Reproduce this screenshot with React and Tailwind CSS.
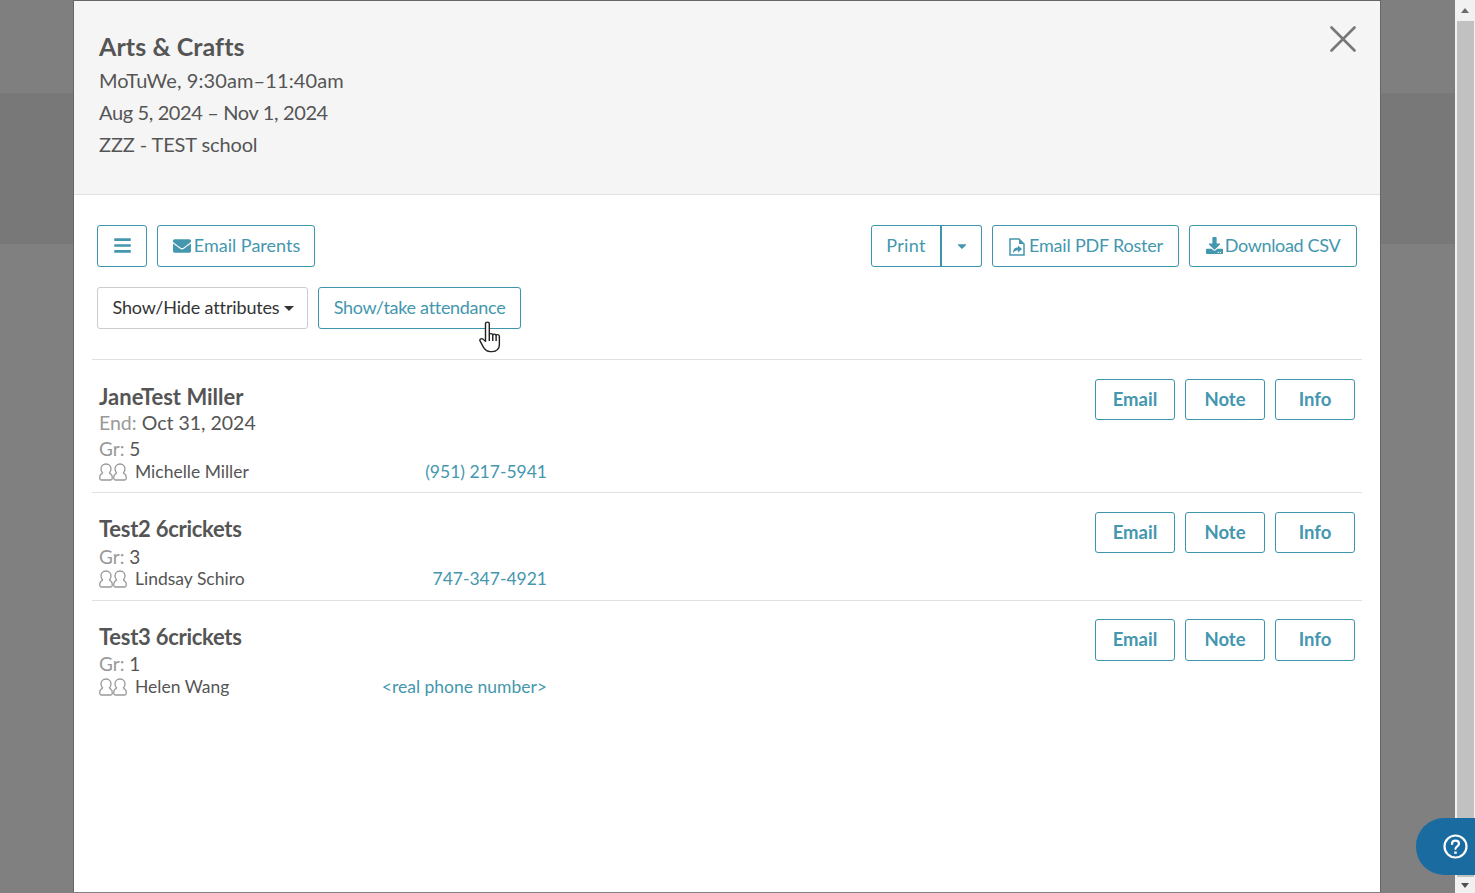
import React from "react";
import { FaBars, FaEnvelope, FaDownload, FaCaretDown } from "react-icons/fa";

const base = "inline-flex items-center justify-center border border-[#3d95ad] rounded-[3px] bg-white text-[#4497ae] leading-none";
const outline = `${base} pb-[3px] text-[18px]`;

function FileShare() {
  return (
    <svg width="16" height="18" viewBox="0 0 16 18" className="mr-[4px] mt-[4px] shrink-0" fill="none">
      <path d="M1 1h9L15 6v11H1z" stroke="#4497ae" strokeWidth="1.500" />
      <path d="M10 1v5h5" fill="#4497ae" />
      <path d="M4 15c0-3.500 1.500-5.500 5-5.500V7.500l4 3.500-4 3.500v-2.200c-2 0-3.500.9-5 2.700z" fill="#4497ae" />
    </svg>
  );
}

function Parents() {
  const one = "M7 1C4 1 2 3 2 6c0 1.600.6 2.800 1.500 3.700-.2.700-.8 1.100-1.400 1.500C1.200 11.800.8 12.500.8 14v1.500C.8 16.400 1.400 17 2.300 17h9.400c.9 0 1.500-.6 1.500-1.500V14c0-1.500-.4-2.200-1.300-2.800-.6-.4-1.200-.8-1.400-1.500.9-.9 1.500-2.100 1.500-3.700C12 3 10 1 7 1z";
  return (
    <svg width="28" height="18" viewBox="0 0 28 18" fill="none" stroke="#999" strokeWidth="1.300" className="shrink-0">
      <path d={one} />
      <path d={one} transform="translate(14 0)" />
    </svg>
  );
}

function Student({ name, end, grade, parent, phone, h, btnCls, btnH, pad, nameTrack, grMt, parentMt }) {
  return (
    <div className={`flex justify-between border-b border-[#e0e0e0] pl-[7px] pr-[7px] ${h}`}>
      <div className={`w-[448px] ${pad}`}>
        <div className={`text-[22px] leading-[30px] font-bold text-[#555] ${nameTrack}`}>{name}</div>
        {end && (
          <div className="text-[19.500px] leading-[24px] text-[#555] mt-[-1px]">
            <span className="text-[#999]">End:</span> {end}
          </div>
        )}
        <div className={`text-[19px] leading-[24px] text-[#555] ${grMt}`}>
          <span className="text-[#999]">Gr:</span> {grade}
        </div>
        <div className={`flex items-center justify-between text-[17.500px] leading-[22px] ${parentMt}`}>
          <span className="flex items-center gap-[8px] text-[#555]">
            <Parents />
            {parent}
          </span>
          <span className="text-[#4497ae]">{phone}</span>
        </div>
      </div>
      <div className={`flex gap-[10px] items-start ${btnCls}`}>
        {["Email", "Note", "Info"].map((t) => (
          <button key={t} className={`${base} w-[80px] ${btnH} pb-[1px] font-bold text-[18.500px]`}>{t}</button>
        ))}
      </div>
    </div>
  );
}

export default function App() {
  return (
    <div className="relative flex w-[1475px] h-[893px] overflow-hidden font-['Lato','Open_Sans',sans-serif] bg-[#7f7f7f]">
      <div className="flex-1 flex flex-col">
        <div className="h-[94px] bg-[#7f7f7f] border-b border-[#797979]"></div>
        <div className="h-[150px] bg-[#787878]"></div>
        <div className="flex-1 bg-[#808080]"></div>
      </div>

      <div className="w-[20px] flex flex-col items-center bg-[#f1f1f1]">
        <div className="h-[21px] flex items-center justify-center">
          <div className="w-0 h-0 border-x-[4px] border-x-transparent border-b-[5px] border-b-[#6b6b6b]"></div>
        </div>
        <div className="w-[17px] h-[856px] bg-[#c1c1c1]"></div>
        <div className="flex-1 flex items-center justify-center">
          <div className="w-0 h-0 border-x-[4px] border-x-transparent border-t-[5px] border-t-[#505050]"></div>
        </div>
      </div>

      {/* Modal */}
      <div className="absolute left-[73px] top-0 w-[1308px] h-[892px] bg-white border border-[#666] border-b-0 flex flex-col">
        <div className="relative h-[194px] shrink-0 bg-[#f5f5f5] border-b border-[#e2e2e2] pl-[25px] pt-[28px] text-[20px] leading-[32px] text-[#555]">
          <div className="text-[25px] leading-[34px] font-bold text-[#555] tracking-[0.08px]">Arts &amp; Crafts</div>
          <div className="mt-[1px] tracking-[0.1px]">MoTuWe, 9:30am–11:40am</div>
          <div className="tracking-[-0.37px]">Aug 5, 2024 – Nov 1, 2024</div>
          <div className="tracking-[-0.12px]">ZZZ - TEST school</div>
          <svg className="absolute right-[24px] top-[25px]" width="26" height="26" viewBox="0 0 26 26" stroke="#777" strokeWidth="2.600" strokeLinecap="round">
            <path d="M1.500 1.500l23 23M24.500 1.500l-23 23" />
          </svg>
        </div>

        <div className="px-[18px] pt-[30px] flex flex-col">
          <div className="flex justify-between px-[5px]">
            <div className="flex gap-[10px]">
              <button className={`${outline} h-[42px] w-[50px]`}><FaBars size={19} className="mt-[1px]" /></button>
              <button className={`${outline} h-[42px] w-[158px] pl-[1px]`}>
                <FaEnvelope size={18} className="mr-[3px] mt-[3px]" />Email Parents
              </button>
            </div>
            <div className="flex gap-[10px]">
              <div className="flex">
                <button className={`${outline} h-[42px] w-[70px] rounded-r-none tracking-[0.3px]`}>Print</button>
                <button className={`${outline} h-[42px] w-[42px] rounded-l-none border-l-[2px] ml-[-1px]`}><FaCaretDown size={14} className="mt-[3px]" /></button>
              </div>
              <button className={`${outline} h-[42px] w-[187px] pl-[1px] tracking-[-0.2px]`}><FileShare />Email PDF Roster</button>
              <button className={`${outline} h-[42px] w-[168px] tracking-[-0.35px]`}>
                <FaDownload size={17} className="mr-[2px] mt-[1px]" />Download CSV
              </button>
            </div>
          </div>

          <div className="flex gap-[10px] mt-[20px] px-[5px]">
            <button className="inline-flex items-center justify-center h-[42px] pb-[3px] pl-[1px] w-[211px] border border-[#ccc] rounded-[3px] bg-white text-[#333] text-[18px] leading-none tracking-[-0.15px]">
              Show/Hide attributes
              <span className="ml-[4px] mt-[4px] w-0 h-0 border-x-[5px] border-x-transparent border-t-[5px] border-t-[#333]"></span>
            </button>
            <div className="relative">
              <button className={`${outline} h-[42px] w-[203px] tracking-[-0.3px]`}>Show/take attendance</button>
              <svg className="absolute left-[161px] top-[34px]" width="26" height="32" viewBox="0 0 24 33" preserveAspectRatio="none" fill="white" stroke="#222" strokeWidth="1.300" strokeLinejoin="round">
                <path d="M6 3c0-2.500 3.500-2.500 3.500 0v11c0-1.500 3.200-1.500 3.200.5 0-1.500 3.100-1.500 3.100.5 0-1.500 3-1.500 3 .8v9c0 3.500-2.500 6.700-6.500 6.700h-2c-3 0-4.500-1.500-6-4L1.200 21c-1.200-2 .8-3.500 2.500-2.300L6 21z" />
                <path d="M12.700 14.500v6M15.800 15v5.500M9.500 14v6.500" fill="none" />
              </svg>
            </div>
          </div>

          <div className="mt-[30px] border-t border-[#e0e0e0]">
            <Student h="h-[133px]" pad="pt-[22px]" btnCls="pt-[19px]" btnH="h-[41px]" grMt="mt-[2px]" parentMt="mt-[0px]" name="JaneTest Miller" end="Oct 31, 2024" grade="5" parent="Michelle Miller" phone="(951) 217-5941" />
            <Student h="h-[108px]" pad="pt-[21px]" btnCls="pt-[19px]" btnH="h-[41px]" grMt="mt-[1px]" parentMt="mt-[-1px]" nameTrack="tracking-[-0.27px]" name="Test2 6crickets" grade="3" parent="Lindsay Schiro" phone="747-347-4921" />
            <div className="[&>div]:border-b-0">
              <Student h="h-[108px]" pad="pt-[21px]" btnCls="pt-[18px]" btnH="h-[42px]" grMt="mt-[0px]" parentMt="mt-[0px]" nameTrack="tracking-[-0.27px]" name="Test3 6crickets" grade="1" parent="Helen Wang" phone="<real phone number>" />
            </div>
          </div>
        </div>
      </div>

      {/* Help */}
      <button className="absolute left-[1416px] top-[818px] w-[59px] h-[57px] rounded-l-[28px] bg-[#1a6b9f] flex items-center pl-[27px]">
        <svg width="25" height="25" viewBox="0 0 25 25" fill="none" stroke="white" strokeWidth="2.200">
          <circle cx="12.500" cy="12.500" r="11" />
          <path d="M9 10c0-2 1.500-3.300 3.500-3.300S16 8 16 9.800c0 2.500-3.500 2.500-3.500 5" strokeLinecap="round" />
          <path d="M12.500 17.500v2.300" strokeWidth="2.500" />
        </svg>
      </button>
    </div>
  );
}
